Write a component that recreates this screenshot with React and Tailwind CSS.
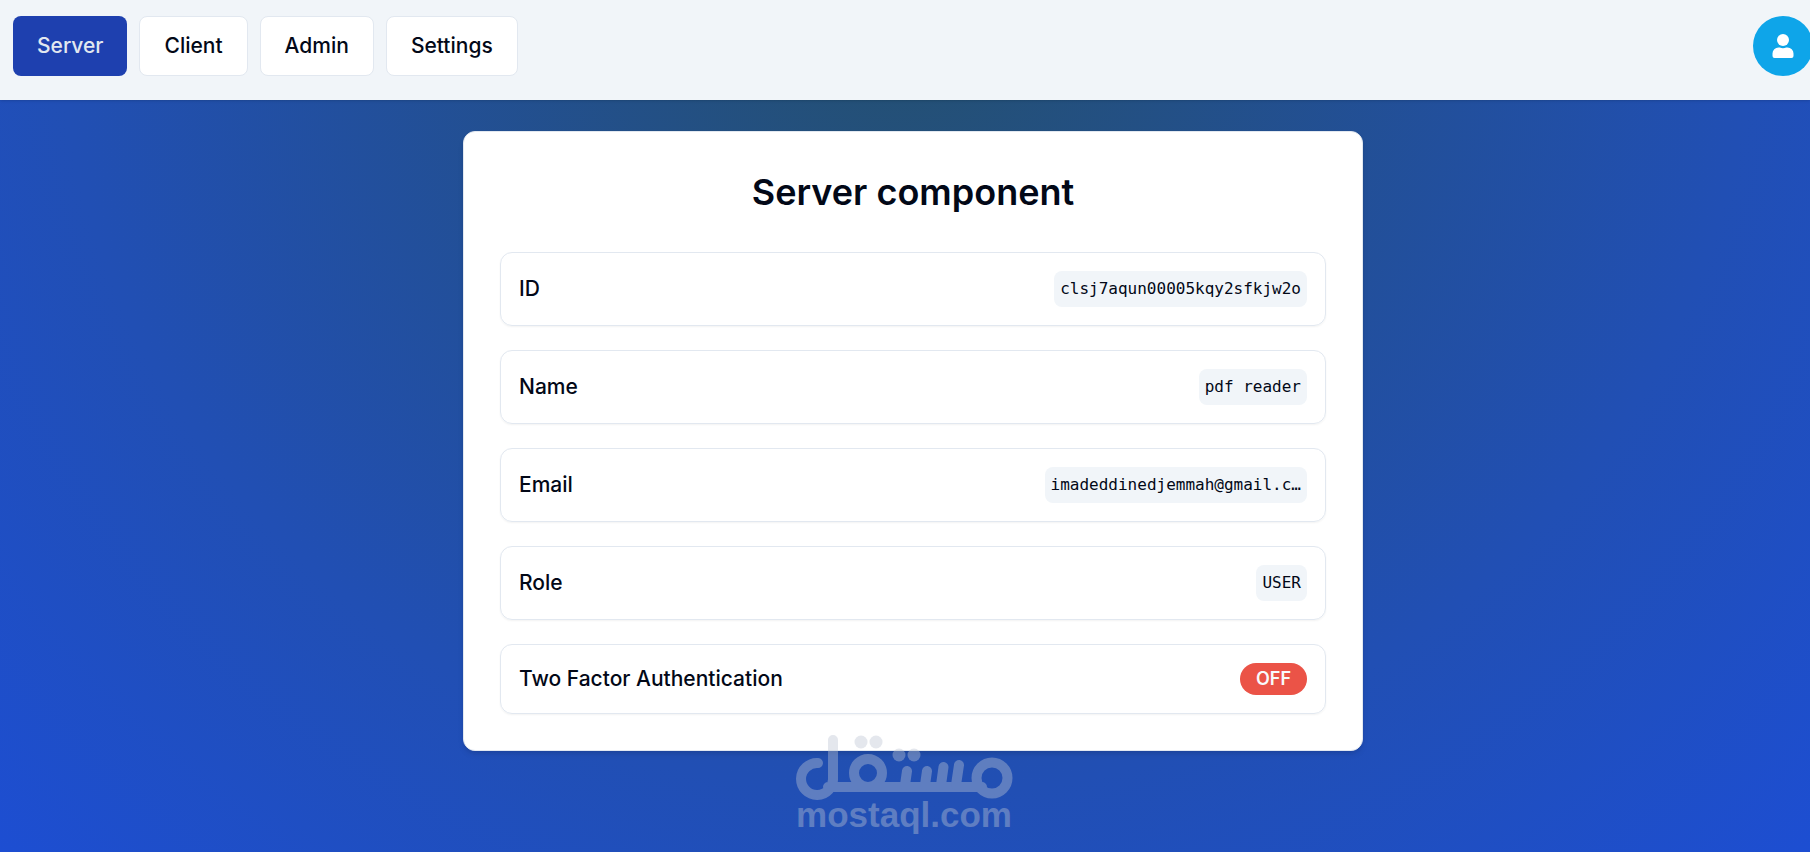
import React from 'react';
import clsx from 'clsx';

const links = [
  { label: 'Server', href: '#server' },
  { label: 'Client', href: '#client' },
  { label: 'Admin', href: '#admin' },
  { label: 'Settings', href: '#settings' }
];

const user = {
  id: 'clsj7aqun00005kqy2sfkjw2o',
  name: 'pdf reader',
  email: 'imadeddinedjemmah@gmail.c…',
  role: 'USER',
  isTwoFactorEnabled: false
};

const Navbar = () => (
  <header className="relative flex items-start justify-between h-[100px] pl-[13px] pt-4 bg-[#f1f5f9] shadow-sm">
    <nav className="flex gap-3">
      {links.map((link, index) => (
        <a
          key={link.label}
          href={link.href}
          className={clsx(
            'flex items-center h-[60px] px-6 rounded-lg text-[21px] leading-[30px] font-medium',
            index === 0 ? 'bg-[#1e40af] text-[#e2e8f0]' : 'border border-[#e2e8f0] bg-white'
          )}
        >
          {link.label}
        </a>
      ))}
    </nav>
    <button
      type="button"
      aria-label="Account"
      className="flex items-center justify-center shrink-0 size-[60px] -mr-[3px] rounded-full bg-[#0ea5e9] text-white"
    >
      <svg viewBox="0 0 24 24" className="size-6" fill="currentColor" aria-hidden="true">
        <circle cx="12" cy="6" r="6" />
        <path d="M7.500 13.500h1.300q3.200 1.300 6.400 0h1.300a6 6 0 0 1 6 6v2.500a2 2 0 0 1-2 2h-17a2 2 0 0 1-2-2v-2.500a6 6 0 0 1 6-6z" />
      </svg>
    </button>
  </header>
);

const InfoRow = ({ label, children }) => (
  <div className="flex items-center justify-between p-[18px] rounded-xl border border-[#e2e8f0] shadow-xs">
    <dt className="text-[21px] leading-[30px] font-medium">{label}</dt>
    <dd className="flex">{children}</dd>
  </div>
);

const Code = ({ children }) => (
  <code className="h-9 px-[6px] rounded-lg bg-[#f1f5f9] font-['DejaVu_Sans_Mono',monospace] text-[16px] leading-[36px]">
    {children}
  </code>
);

const Watermark = () => (
  <div className="absolute left-1/2 top-[735px] -translate-x-1/2 -ml-[1px] w-[220px] opacity-40 text-[#bcc4d4]">
    <svg viewBox="0 0 220 66" className="block w-full" fill="none" stroke="currentColor" strokeWidth="10" strokeLinecap="round" aria-hidden="true">
      <path d="M24 28A16 16 0 1 0 39 43V5M34 52H188" strokeLinejoin="round" />
      <circle cx="74" cy="38" r="14" />
      <circle cx="198" cy="43" r="15.500" />
      <path d="M111 50L113 36M131 50L133 36M147 50L149.500 32M162 50L165 30" />
      <g fill="currentColor" stroke="none">
        <circle cx="67" cy="7" r="6.500" />
        <circle cx="82" cy="7" r="6.500" />
        <circle cx="105" cy="20" r="6.500" />
        <circle cx="120" cy="20" r="6.500" />
      </g>
    </svg>
    <p className="-mt-1 text-center font-['Liberation_Sans',sans-serif] font-bold text-[35px] leading-[36px]">mostaql.com</p>
  </div>
);

const App = () => {
  return (
    <div className="relative min-h-screen flex flex-col overflow-hidden font-['Inter',sans-serif] text-[#020817] bg-[radial-gradient(ellipse_at_top,#24506e,#214fb4_66%,#1d4ed2)]">
      <Navbar />
      <main className="flex-1 flex items-start justify-center pl-4 pt-[31px] pb-[100px]">
        <section className="w-full max-w-[900px] p-9 rounded-xl border border-[#e2e8f0] bg-white shadow-md">
          <h1 className="mb-9 text-center text-[36px] leading-[48px] font-semibold">Server component</h1>
          <dl className="flex flex-col gap-6">
            <InfoRow label="ID"><Code>{user.id}</Code></InfoRow>
            <InfoRow label="Name"><Code>{user.name}</Code></InfoRow>
            <InfoRow label="Email"><Code>{user.email}</Code></InfoRow>
            <InfoRow label="Role"><Code>{user.role}</Code></InfoRow>
            <InfoRow label="Two Factor Authentication">
              <span className="h-8 px-4 rounded-full bg-[#eb5347] text-[#f8fafc] text-[18px] leading-[32px] font-semibold">
                {user.isTwoFactorEnabled ? 'ON' : 'OFF'}
              </span>
            </InfoRow>
          </dl>
        </section>
      </main>
      <Watermark />
    </div>
  );
};

export default App;
